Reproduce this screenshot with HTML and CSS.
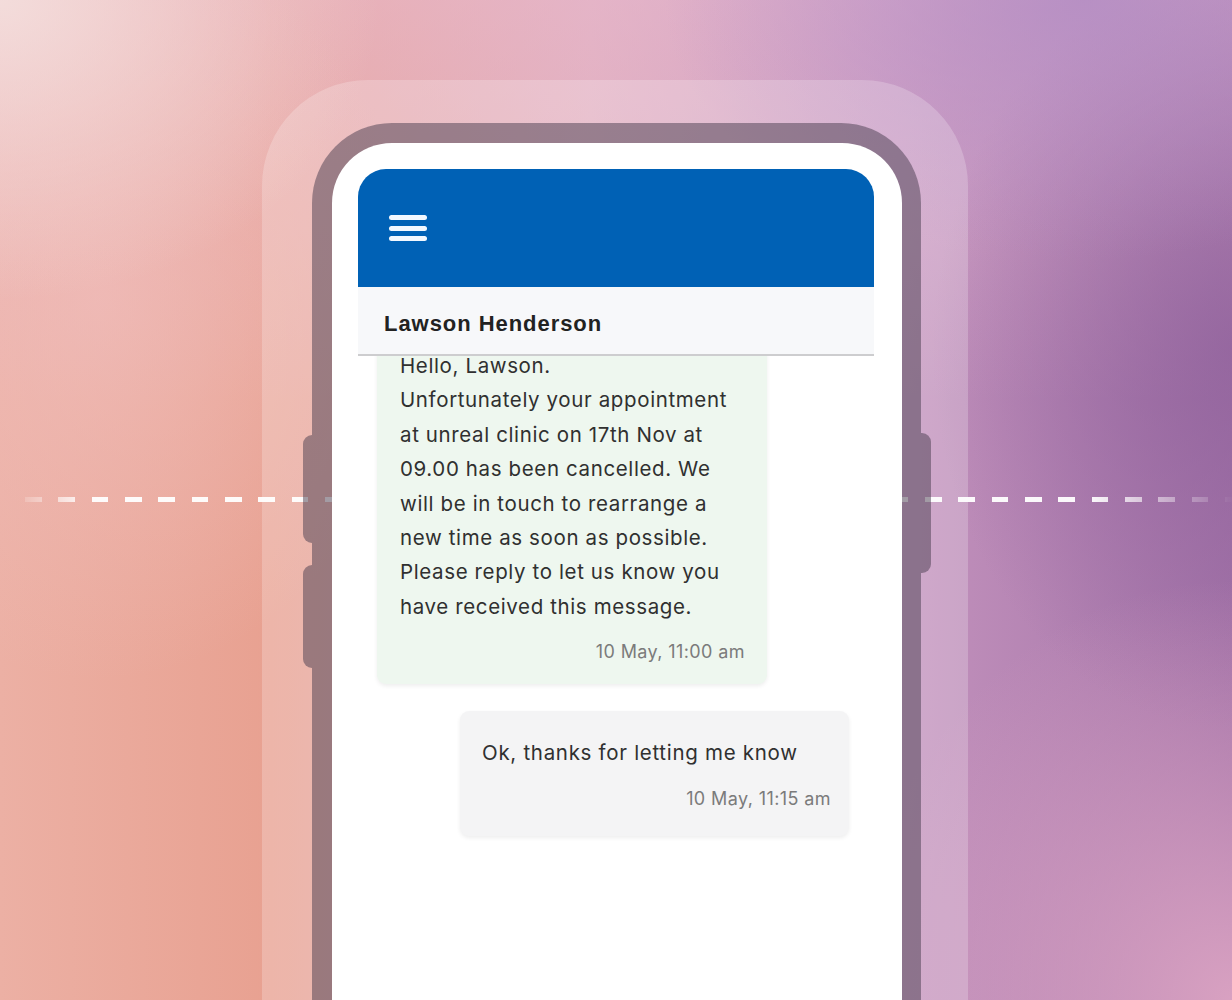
FILE: index.html
```html
<!DOCTYPE html>
<html lang="en">
<head>
<meta charset="utf-8">
<title>Appointment message</title>
<link rel="stylesheet" href="styles.css">
</head>
<body>
<div class="canvas">
  <div class="dashes"></div>
  <div class="halo">
    <div class="frame">
      <span class="side-btn side-l1"></span>
      <span class="side-btn side-l2"></span>
      <span class="side-btn side-r"></span>
      <div class="screen">
        <header class="appbar">
          <div class="burger"><i></i><i></i><i></i></div>
        </header>
        <div class="chat">
          <div class="contact">Lawson Henderson</div>
          <div class="messages">
            <div class="bubble bubble-in">
              <p class="msg-text">Hello, Lawson.<br>Unfortunately your appointment<br>at unreal clinic on 17th Nov at<br>09.00 has been cancelled. We<br>will be in touch to rearrange a<br>new time as soon as possible.<br>Please reply to let us know you<br>have received this message.</p>
              <div class="stamp">10 May, 11:00 am</div>
            </div>
            <div class="bubble bubble-out">
              <p class="msg-text">Ok, thanks for letting me know</p>
              <div class="stamp">10 May, 11:15 am</div>
            </div>
          </div>
        </div>
      </div>
    </div>
  </div>
</div>
</body>
</html>
```
FILE: styles.css
```css
* { box-sizing: border-box; }
html, body { margin: 0; padding: 0; }
body { width: 1232px; height: 1000px; overflow: hidden; font-family: Inter, "Liberation Sans", sans-serif; }

.canvas {
  position: relative;
  width: 1232px;
  height: 1000px;
  overflow: hidden;
  padding: 80px 0 0 262px;
  background:
    radial-gradient(ellipse 380px 300px at 0% 0%, rgba(244,224,222,0.9) 0%, rgba(244,224,222,0) 100%),
    radial-gradient(ellipse 320px 380px at 8% 30%, rgba(240,190,188,0.7) 0%, rgba(240,190,188,0) 100%),
    radial-gradient(ellipse 380px 420px at 100% 100%, rgba(222,166,196,0.9) 0%, rgba(222,166,196,0) 100%),
    radial-gradient(ellipse 420px 260px at 88% 0%, rgba(178,140,196,0.8) 0%, rgba(178,140,196,0) 100%),
    radial-gradient(ellipse 300px 380px at 100% 35%, rgba(144,98,156,0.75) 0%, rgba(144,98,156,0) 100%),
    linear-gradient(180deg, rgba(234,190,214,0.5) 0%, rgba(234,190,214,0) 40%),
    linear-gradient(90deg, #ecb0a4 0%, #e8a191 22%, #dfaab8 48%, #c493bd 72%, #a373a8 100%);
}

.dashes {
  position: absolute;
  left: 0;
  top: 497px;
  width: 1232px;
  height: 5px;
  background: repeating-linear-gradient(90deg, rgba(255,255,255,0.95) 0 16.67px, transparent 16.67px 33.333px);
  background-position: 25px 0;
  -webkit-mask-image: linear-gradient(90deg, transparent 10px, #000 90px, #000 1090px, transparent 1235px);
  mask-image: linear-gradient(90deg, transparent 10px, #000 90px, #000 1090px, transparent 1235px);
}

.halo {
  position: relative;
  width: 706px;
  height: 1000px;
  border-radius: 106px 106px 0 0;
  background: rgba(255,255,255,0.22);
  padding: 43px 47px 0 50px;
}

.frame {
  position: relative;
  height: 900px;
  border-radius: 80px 80px 0 0;
  background: rgba(72,60,78,0.5);
  padding: 20px 19px 0 20px;
}

.side-btn {
  position: absolute;
  width: 10px;
  background: rgba(72,60,78,0.5);
}
.side-l1 { left: -9px; top: 312px; height: 108px; width: 9px; border-radius: 9px 0 0 9px; }
.side-l2 { left: -9px; top: 442px; height: 103px; width: 9px; border-radius: 9px 0 0 9px; }
.side-r { right: -10px; top: 310px; height: 140px; border-radius: 0 9px 9px 0; }

.screen {
  height: 880px;
  background: #ffffff;
  border-radius: 60px 60px 0 0;
  padding: 26px 28px 0 26px;
  display: flex;
  flex-direction: column;
}

.appbar {
  height: 118px;
  flex: none;
  background: #0061b5;
  border-radius: 28px 28px 0 0;
  display: flex;
  align-items: center;
  padding-left: 31px;
}

.burger {
  display: flex;
  flex-direction: column;
  gap: 5.5px;
}
.burger i {
  display: block;
  width: 38px;
  height: 5px;
  border-radius: 3px;
  background: #f2f8ff;
}

.chat {
  position: relative;
  flex: 1;
  overflow: hidden;
}

.contact {
  position: absolute;
  top: 0;
  left: 0;
  right: 0;
  z-index: 2;
  height: 69px;
  background: #f7f8fa;
  border-bottom: 2px solid #cdcdcf;
  display: flex;
  align-items: center;
  padding: 7px 0 0 26px;
  font-family: "Liberation Sans", Arial, sans-serif;
  font-weight: 700;
  font-size: 22px;
  letter-spacing: 0.95px;
  color: #222222;
}

.messages {
  display: flex;
  flex-direction: column;
  align-items: flex-start;
  padding-top: 40px;
}

.bubble {
  border-radius: 9px;
  box-shadow: 0 2px 4px rgba(0,0,0,0.07);
}

.bubble-in {
  width: 390px;
  margin-left: 19px;
  background: #eef7ef;
  padding: 22px 22px 20px 23px;
}

.bubble-out {
  width: 389px;
  align-self: flex-end;
  margin: 27px 25px 0 0;
  background: #f4f4f5;
  padding: 28px 18px 25px 22px;
}

.msg-text {
  margin: 0;
  font-size: 20.5px;
  line-height: 34.4px;
  letter-spacing: 0.62px;
  color: #303030;
  white-space: nowrap;
}
.bubble-out .msg-text { line-height: 28px; letter-spacing: 0.7px; }

.stamp {
  margin-top: 16px;
  text-align: right;
  font-size: 18px;
  line-height: 24px;
  letter-spacing: 0.4px;
  color: #7b7b7b;
}
.bubble-out .stamp { margin-top: 20px; }
```
